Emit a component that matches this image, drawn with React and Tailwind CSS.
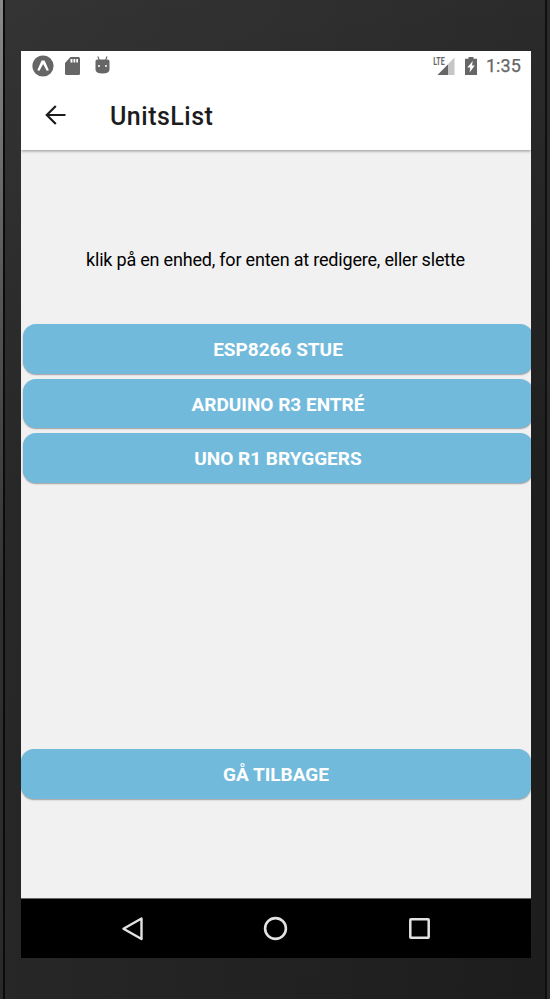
const units = ['ESP8266 STUE', 'ARDUINO R3 ENTRÉ', 'UNO R1 BRYGGERS'];

function Button({ children, className }) {
  return (
    <button
      className={`flex h-[49.6px] shrink-0 items-center justify-center rounded-[13px] bg-[#72badb] text-[19px] leading-none font-bold text-white shadow-[0_1px_1.5px_rgba(0,0,0,0.35)] ${className}`}
    >
      <span className="translate-y-[0.5px]">{children}</span>
    </button>
  );
}

function StatusBar() {
  return (
    <div className="flex h-[30px] items-center pl-[11px] pr-[10px] text-[#666666]">
      <svg className="h-[22px] w-[22px]" viewBox="0 0 22 22">
        <circle cx="11" cy="11" r="10.600" fill="#666" />
        <path d="M5.300 15.200 9.600 5.500h3l4.300 9.700-2.200.5L11.100 9 7.500 15.700z" fill="#fff" />
      </svg>
      <svg className="ml-[11px] h-[18px] w-[16px]" viewBox="0 0 16 18">
        <path d="M5.500 0h8Q15 0 15 1.500v15q0 1.500-1.500 1.500h-12Q0 18 0 16.500V6z" fill="#666" />
        <path d="M5.500 2h2v3.500h-2zM8.500 2h1.800v3.500H8.500zM11.300 2h1.700v3.500h-1.700z" fill="#fff" />
      </svg>
      <svg className="ml-[14px] h-[18px] w-[16px] -translate-y-[1px]" viewBox="0 0 16 18">
        <path d="M2.800 .5 4.300 4M12 .5 10.700 4" stroke="#666" strokeWidth="1.100" />
        <path d="M.5 5Q.5 3.500 2.500 3.500h10Q14.500 3.500 14.500 5v8.500q0 4-7 4t-7-4z" fill="#666" />
        <circle cx="4" cy="10" r="1" fill="#fff" />
        <circle cx="11" cy="10" r="1" fill="#fff" />
      </svg>
      <svg className="ml-auto h-[24px] w-[22px] overflow-visible" viewBox="0 0 22 24">
        <path d="M21.500 3.500V21H4.500z" fill="#c6c6c6" />
        <path d="M15 10.500V21H4.500z" fill="#666" />
        <text x="0.3" y="11.300" fontFamily="Roboto" fontWeight="700" fontSize="11" textLength="11.300" lengthAdjust="spacingAndGlyphs" fill="#666">LTE</text>
      </svg>
      <svg className="ml-[10px] h-[18px] w-[12px]" viewBox="0 0 12 18">
        <path d="M3.500 0h5v1.800H12V18H0V1.800h3.500z" fill="#666" />
        <path d="M7.800 4 2.300 10.500h3L4.500 15.500l5.300-7H7z" fill="#fff" />
      </svg>
      <span className="ml-[9px] text-[18px] leading-none tracking-[0.1px] [-webkit-text-stroke:0.25px_#666]">1:35</span>
    </div>
  );
}

function NavBar() {
  return (
    <nav className="flex h-[60px] shrink-0 items-center justify-center gap-[118.5px] border-t border-[#666] bg-black pr-[1px] pb-[1px]">
      <svg className="h-[25px] w-[25px]" viewBox="0 0 25 25" fill="none" stroke="#e2e2e2" strokeWidth="2.400">
        <path d="M21.500 2.500v20.500L3.500 12.700z" strokeLinejoin="round" />
      </svg>
      <svg className="h-[25px] w-[25px]" viewBox="0 0 25 25" fill="none" stroke="#e2e2e2" strokeWidth="2.600">
        <circle cx="12.500" cy="12.500" r="10.400" />
      </svg>
      <svg className="h-[25px] w-[25px]" viewBox="0 0 25 25" fill="none" stroke="#e2e2e2" strokeWidth="2.500">
        <rect x="3.300" y="3.300" width="18.400" height="18.400" rx="0.600" />
      </svg>
    </nav>
  );
}

export default function App() {
  return (
    <div className="flex h-[999px] w-[550px] overflow-hidden bg-[linear-gradient(to_bottom,#2b2b2b,#1e1e1e_50%,#1d1d1d)] font-['Roboto',sans-serif]">
      <div className="w-[3px] shrink-0 bg-[linear-gradient(to_bottom,#8a8a8a,#555_30%,#303030_60%,#292929)]" />
      <div className="w-[2px] shrink-0 bg-[#0b0b0b]" />
      <div className="flex min-w-0 flex-1 flex-col bg-[linear-gradient(to_right,rgba(255,255,255,0.045),transparent)] pt-[51px] pl-[16px] pr-[14px] pb-[41px]">
        <main className="flex h-[907px] w-[510px] flex-col overflow-hidden bg-[#f1f1f1]">
          <header className="h-[98.5px] shrink-0 bg-white shadow-[0_1px_3px_rgba(0,0,0,0.4)]">
            <StatusBar />
            <div className="flex h-[69px] items-center pl-[24px]">
              <svg className="h-[22px] w-[22px] -translate-y-[1px]" viewBox="0 0 22 22" fill="none" stroke="#1c1c1e" strokeWidth="2.200">
                <path d="M20.500 11H2M10.800 2 1.800 11l9 9" />
              </svg>
              <h1 className="ml-[43px] translate-y-[1px] text-[25px] leading-none font-medium tracking-[0.5px] text-[#1c1c1e]">UnitsList</h1>
            </div>
          </header>
          <p className="mt-[99.5px] pr-[1px] text-center text-[18px] leading-[21px] tracking-[-0.2px] whitespace-nowrap text-black">
            klik på en enhed, for enten at redigere, eller slette
          </p>
          <div className="mt-[54px] ml-[2px] flex w-[510px] shrink-0 flex-col gap-[5px]">
            {units.map((unit) => (
              <Button key={unit} className="w-full">{unit}</Button>
            ))}
          </div>
          <Button className="mt-auto mb-[99.4px] w-full">GÅ TILBAGE</Button>
          <NavBar />
        </main>
      </div>
      <div className="w-[2px] shrink-0 bg-[#0f0f0f]" />
      <div className="w-[3px] shrink-0 bg-[#2a2a2a]" />
    </div>
  );
}
